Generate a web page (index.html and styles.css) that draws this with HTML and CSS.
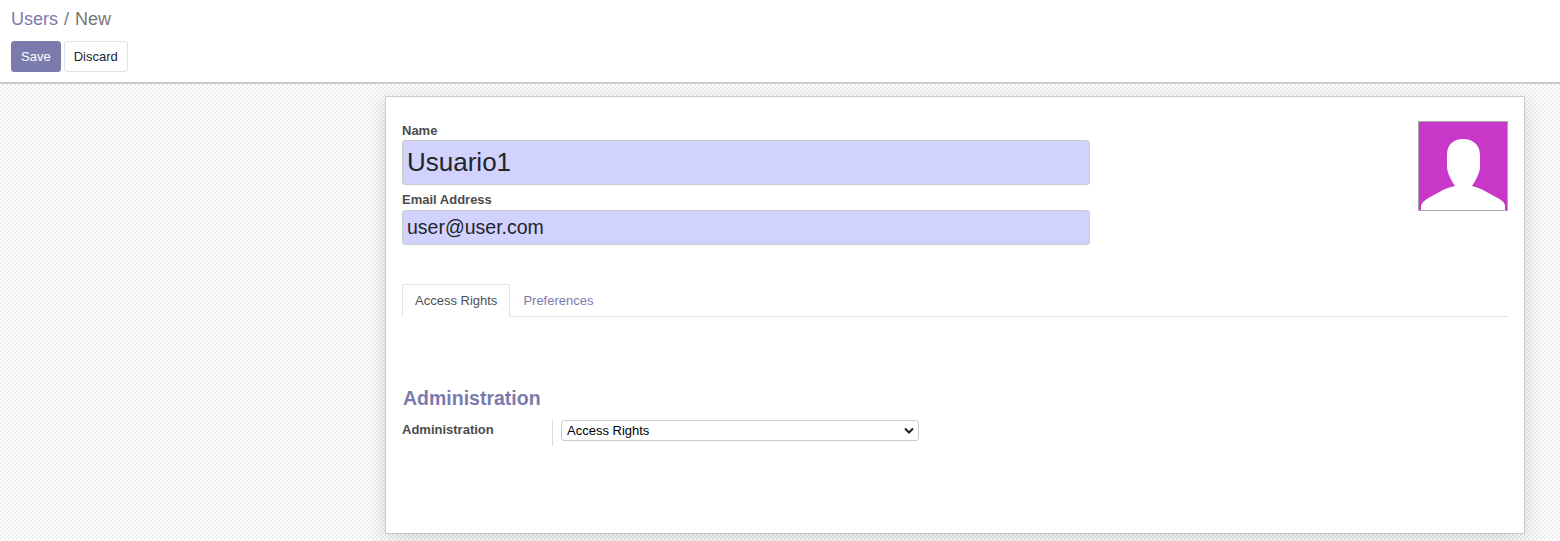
FILE: index.html
```
<!DOCTYPE html>
<html lang="en">
<head>
<meta charset="utf-8">
<title>Users / New</title>
<link rel="stylesheet" href="styles.css">
</head>
<body>
<header class="control-panel">
  <nav class="breadcrumb"><a class="crumb-link">Users</a><span class="separator">/</span><span>New</span></nav>
  <div class="actions">
    <button class="btn btn-primary">Save</button>
    <button class="btn btn-secondary">Discard</button>
  </div>
</header>
<main class="form-view">
  <section class="sheet">
    <div class="title-row">
      <div class="fields">
        <label class="label" for="name">Name</label>
        <input class="input input-name" id="name" value="Usuario1">
        <label class="label label-email" for="email">Email Address</label>
        <input class="input input-email" id="email" value="user@user.com">
      </div>
      <svg class="avatar" viewBox="0 0 88 88">
        <rect width="88" height="88" fill="#c837c8"/>
        <path fill="#fff" d="M2 88V84C3 80 7 77 13 74L25 67.500Q30 65 36 64C32 58 28 50 28 45V33C28 23 34 17 44 17S61 23 61 33V45C61 50 57 58 53 64Q58 65 63 67.500L75 74C81 77 86 80 86 84V88Z"/>
      </svg>
    </div>
    <div class="tabs">
      <a class="tab tab-active">Access Rights</a>
      <a class="tab">Preferences</a>
    </div>
    <h2 class="group-title">Administration</h2>
    <div class="group-row">
      <label class="label group-label" for="level">Administration</label>
      <div class="group-field">
        <div class="select-box">
          <span class="select-value" id="level">Access Rights</span>
          <svg class="chevron" viewBox="0 0 10 8"><path d="M1 1.500L5 5.500L9 1.500" fill="none" stroke="#1f1f1f" stroke-width="2"/></svg>
        </div>
      </div>
    </div>
  </section>
</main>
</body>
</html>
```
FILE: styles.css
```
* { box-sizing: border-box; }
body {
  margin: 0;
  height: 541px;
  overflow: hidden;
  display: flex;
  flex-direction: column;
  background: #fff;
  color: #4c4c4c;
  font: 13px/20px "Liberation Sans", Arial, sans-serif;
}
.control-panel {
  height: 84px;
  flex: none;
  padding: 6px 11px 0;
  border-bottom: 2px solid #ccc;
}
.breadcrumb {
  display: flex;
  font-size: 18px;
  line-height: 27px;
  color: #777;
}
.crumb-link { color: #7c7bad; }
.separator { padding: 0 6px; }
.actions { display: flex; gap: 3px; margin-top: 8px; }
.btn {
  height: 31px;
  padding: 0 9px;
  border: 1px solid #dee2e6;
  border-radius: 3px;
  background: #fff;
  color: #212529;
  font: inherit;
}
.btn-primary { border-color: #7c7bad; background: #7c7bad; color: #fff; }
.form-view {
  flex: 1;
  overflow: hidden;
  padding: 12px 35px 7px 385px;
  background: repeating-conic-gradient(#eee 0 25%, #fff 0 50%) 0 0 / 4px 4px;
}
.sheet {
  height: 438px;
  padding: 24px 16px 0;
  border: 1px solid #c8c8d3;
  background: #fff;
  box-shadow: 0 5px 20px rgba(0, 0, 0, 0.14);
}
.title-row { display: flex; justify-content: space-between; height: 163px; }
.fields { display: flex; flex-direction: column; width: 688px; }
.label { height: 19px; font-weight: bold; line-height: 19px; }
.label-email { margin-top: 5px; height: 20px; }
.input {
  width: 100%;
  padding: 0 4px;
  border: 1px solid #ccc;
  border-radius: 3px;
  background: #d2d2ff;
  color: #212529;
  font-family: inherit;
}
.input-name { height: 45px; font-size: 26px; }
.input-email { height: 35px; font-size: 19.5px; }
.avatar { width: 90px; height: 90px; border: 1px solid #a8a8a8; }
.tabs { display: flex; height: 33px; border-bottom: 1px solid #dee2e6; }
.tab {
  height: 33px;
  padding: 6px 12px;
  border: 1px solid transparent;
  border-radius: 3px 3px 0 0;
  color: #7c7bad;
}
.tab-active { border-color: #dee2e6 #dee2e6 #fff; background: #fff; color: #495057; }
.group-title {
  margin: 66px 0 0 1px;
  color: #7c7bad;
  font-size: 19.5px;
  line-height: 30px;
}
.group-row { display: flex; margin-top: 7px; height: 26px; }
.group-label { width: 150px; }
.group-field { padding-left: 8px; border-left: 1px solid #ddd; }
.select-box {
  display: flex;
  justify-content: space-between;
  align-items: center;
  width: 358px;
  height: 21px;
  padding: 0 4px 0 5px;
  border: 1px solid #ccc;
  border-radius: 3px;
  color: #000;
}
.chevron { width: 10px; height: 8px; }
```
